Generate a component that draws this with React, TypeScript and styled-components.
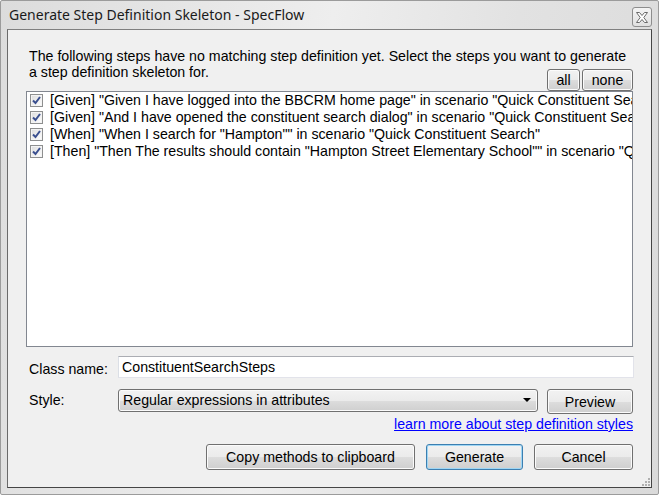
import React from "react";
import styled, { createGlobalStyle, css } from "styled-components";

const Global = createGlobalStyle`
  html, body { margin: 0; padding: 0; background: #ffffff; }
  * { box-sizing: border-box; }
`;

const Window = styled.div`
  position: relative;
  width: 659px;
  height: 495px;
  border: 1px solid #9b9b9b;
  border-radius: 2px;
  background: linear-gradient(100deg, #dcdcdc 0%, #e8e8e8 30%, #eeeeee 45%, #e2e2e2 70%, #dadada 100%);
  padding: 0 6px 6px 6px;
  display: flex;
  flex-direction: column;
  font-family: "Liberation Sans", Arial, sans-serif;
  font-size: 14.2px;
  color: #000;
`;

const TitleBar = styled.div`
  height: 28px;
  display: flex;
  align-items: flex-start;
  justify-content: space-between;
  padding-left: 2px;
`;

const Title = styled.div`
  font-family: "Noto Sans", "Open Sans", sans-serif;
  font-size: 14px;
  line-height: 18px;
  margin-top: 5px;
  color: #1a1a1a;
  white-space: nowrap;
`;

const CloseButton = styled.div`
  width: 20px;
  height: 20px;
  margin-top: 6px;
  border: 1px solid #8d8d8d;
  border-radius: 3px;
  background: linear-gradient(#f4f4f4, #e0e0e0);
  display: flex;
  align-items: center;
  justify-content: center;
`;

const Client = styled.div`
  flex: 1;
  border: 1px solid #454545;
  border-top-color: #7f7f7f;
  border-left-color: #6a6a6a;
  background: #f0f0f0;
  padding: 0 18px 0 18px;
  display: flex;
  flex-direction: column;
`;

const Intro = styled.div`
  margin: 18px 0 0 3px;
  line-height: 16px;
  white-space: nowrap;
`;

const TopButtons = styled.div`
  margin-top: -11px;
  height: 22px;
  display: flex;
  justify-content: flex-end;
  gap: 2px;
`;

const buttonBase = css`
  font-family: "Liberation Sans", Arial, sans-serif;
  font-size: 14.2px;
  color: #000;
  border: 1px solid #707070;
  border-radius: 3px;
  background: linear-gradient(to bottom, #f2f2f2 0%, #ebebeb 50%, #dddddd 51%, #cfcfcf 100%);
  box-shadow: inset 0 0 0 1px #fbfbfb;
  display: flex;
  align-items: center;
  justify-content: center;
  padding: 0;
`;

const Button = styled.button<{ $w: number; $h?: number; $default?: boolean }>`
  ${buttonBase};
  width: ${(p) => p.$w}px;
  height: ${(p) => p.$h ?? 26}px;
  ${(p) =>
    p.$default &&
    css`
      border-color: #3c7fb1;
      box-shadow: inset 0 0 0 1px #9fd6f4;
    `}
`;

const List = styled.div`
  height: 256px;
  border: 1px solid #828790;
  background: #fff;
  overflow: hidden;
`;

const Item = styled.div`
  height: 17px;
  display: flex;
  align-items: center;
  padding-left: 3px;
  white-space: nowrap;
  line-height: 17px;
`;

const Check = styled.span`
  flex: none;
  width: 13px;
  height: 13px;
  border: 1px solid #8e8f8f;
  background: linear-gradient(135deg, #dcdcdc, #ffffff);
  box-shadow: inset 0 0 0 1px #f4f4f4;
  display: flex;
  align-items: center;
  justify-content: center;
  margin-right: 7px;
`;

const ItemText = styled.span`
  overflow: hidden;
`;

const FormRow = styled.div<{ $mt: number }>`
  display: flex;
  align-items: flex-start;
  margin-top: ${(p) => p.$mt}px;
`;

const Label = styled.div<{ $top: number }>`
  width: 92px;
  padding-left: 3px;
  padding-top: ${(p) => p.$top}px;
  line-height: 16px;
`;

const TextBox = styled.div`
  flex: 1;
  height: 22px;
  margin-right: -1px;
  border: 1px solid #e2e3ea;
  border-top-color: #abadb3;
  border-left-color: #dbdfe6;
  background: #fff;
  padding: 2px 0 0 3px;
  line-height: 16px;
`;

const Combo = styled.div`
  ${buttonBase};
  width: 420px;
  height: 23px;
  justify-content: space-between;
  padding: 0 6px 1px 4px;
`;

const Arrow = styled.span`
  width: 0;
  height: 0;
  border-left: 4px solid transparent;
  border-right: 4px solid transparent;
  border-top: 4px solid #000;
`;

const Spacer = styled.div`
  flex: 1;
`;

const LinkRow = styled.div`
  margin-top: 2px;
  display: flex;
  justify-content: flex-end;
  line-height: 16px;
`;

const Link = styled.a`
  color: #0000ff;
  text-decoration: underline;
  cursor: pointer;
`;

const BottomButtons = styled.div`
  margin-top: 12px;
  display: flex;
  justify-content: flex-end;
  gap: 11px;
`;

const Grip = styled.svg`
  position: absolute;
  right: 8px;
  bottom: 8px;
`;

const steps = [
  '[Given] "Given I have logged into the BBCRM home page" in scenario "Quick Constituent Search"',
  '[Given] "And I have opened the constituent search dialog" in scenario "Quick Constituent Search"',
  '[When] "When I search for "Hampton"" in scenario "Quick Constituent Search"',
  '[Then] "Then The results should contain "Hampton Street Elementary School"" in scenario "Quick Constituent Search"',
];

const CheckMark = () => (
  <svg width="9" height="9" viewBox="0 0 9 9">
    <path d="M1 4.5 L3.5 7 L8 1" fill="none" stroke="#3a4f8f" strokeWidth="2" />
  </svg>
);

const CloseGlyph = () => (
  <svg width="12" height="11" viewBox="0 0 12 11">
    <path
      d="M0.5 0.5 H3.5 L6 3.5 L8.5 0.5 H11.5 L7.8 5.5 L11.5 10.5 H8.5 L6 7.5 L3.5 10.5 H0.5 L4.2 5.5 Z"
      fill="#fff"
      stroke="#6a6a6a"
      strokeWidth="1"
    />
  </svg>
);

export default function App() {
  return (
    <>
      <Global />
      <Window>
        <TitleBar>
          <Title>Generate Step Definition Skeleton - SpecFlow</Title>
          <CloseButton>
            <CloseGlyph />
          </CloseButton>
        </TitleBar>
        <Client>
          <Intro>
            The following steps have no matching step definition yet. Select the steps you want to generate
            <br />a step definition skeleton for.
          </Intro>
          <TopButtons>
            <Button $w={33} $h={22}>all</Button>
            <Button $w={51} $h={22}>none</Button>
          </TopButtons>
          <List>
            {steps.map((s) => (
              <Item key={s}>
                <Check>
                  <CheckMark />
                </Check>
                <ItemText>{s}</ItemText>
              </Item>
            ))}
          </List>
          <FormRow $mt={9}>
            <Label $top={5}>Class name:</Label>
            <TextBox>ConstituentSearchSteps</TextBox>
          </FormRow>
          <FormRow $mt={11}>
            <Label $top={3}>Style:</Label>
            <Combo>
              <span>Regular expressions in attributes</span>
              <Arrow />
            </Combo>
            <Spacer />
            <Button $w={86} $h={25}>Preview</Button>
          </FormRow>
          <LinkRow>
            <Link>learn more about step definition styles</Link>
          </LinkRow>
          <BottomButtons>
            <Button $w={209}>Copy methods to clipboard</Button>
            <Button $w={97} $default>Generate</Button>
            <Button $w={99}>Cancel</Button>
          </BottomButtons>
        </Client>
        <Grip width="8" height="8" viewBox="0 0 8 8">
          {[
            [6, 0],
            [3, 3],
            [6, 3],
            [0, 6],
            [3, 6],
            [6, 6],
          ].map(([x, y]) => (
            <rect key={`${x}-${y}`} x={x} y={y} width="2" height="2" fill="#b0b0b0" />
          ))}
        </Grip>
      </Window>
    </>
  );
}
